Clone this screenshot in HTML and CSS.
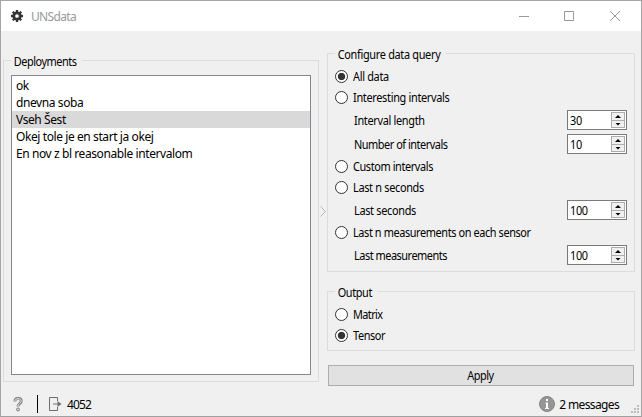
FILE: index.html
```html
<!DOCTYPE html>
<html lang="en">
<head>
<meta charset="utf-8">
<title>UNSdata</title>
<link rel="stylesheet" href="styles.css">
</head>
<body>
<div class="window">
  <header class="titlebar">
    <svg class="gear" width="12" height="12" viewBox="-6 -6 12 12"><circle r="3.2" fill="none" stroke="#333" stroke-width="2.700"/><g stroke="#333" stroke-width="2.300"><path d="M0-6V-3.4M0 6V3.4M-6 0H-3.4M6 0H3.4M-4.300-4.300-2.500-2.500M4.300 4.300 2.500 2.500M-4.300 4.300-2.500 2.500M4.300-4.300 2.500-2.500"/></g></svg>
    <span class="title">UNSdata</span>
    <svg class="controls" width="104" height="12" viewBox="0 0 104 12" fill="none" stroke="#999"><path d="M1 6.5H11M46.500 1.500H55.500V10.500H46.500ZM92 1 102 11M102 1 92 11"/></svg>
  </header>
  <main class="content">
    <section class="group deployments">
      <h2 class="legend tighter">Deployments</h2>
      <ul class="list">
        <li>ok</li>
        <li>dnevna soba</li>
        <li class="selected">Vseh Šest</li>
        <li>Okej tole je en start ja okej</li>
        <li>En nov z bl reasonable intervalom</li>
      </ul>
    </section>
    <div class="splitter"><svg width="6" height="11" viewBox="0 0 6 11" fill="none" stroke="#b4b4b4"><path d="M.5.5 5.500 5.500.5 10.500"/></svg></div>
    <div class="side">
      <section class="group query">
        <h2 class="legend">Configure data query</h2>
        <div class="radio"><i class="dot on"></i><span>All data</span></div>
        <div class="radio"><i class="dot"></i><span>Interesting intervals</span></div>
        <div class="field"><span>Interval length</span><div class="spin"><b>30</b><i class="steps"><i class="up"></i><i class="down"></i></i></div></div>
        <div class="field"><span class="tighter">Number of intervals</span><div class="spin"><b>10</b><i class="steps"><i class="up"></i><i class="down"></i></i></div></div>
        <div class="radio"><i class="dot"></i><span class="tight">Custom intervals</span></div>
        <div class="radio"><i class="dot"></i><span>Last n seconds</span></div>
        <div class="field"><span>Last seconds</span><div class="spin"><b>100</b><i class="steps"><i class="up"></i><i class="down"></i></i></div></div>
        <div class="radio"><i class="dot"></i><span class="tight">Last n measurements on each sensor</span></div>
        <div class="field"><span class="tighter">Last measurements</span><div class="spin"><b>100</b><i class="steps"><i class="up"></i><i class="down"></i></i></div></div>
      </section>
      <section class="group output">
        <h2 class="legend tight">Output</h2>
        <div class="radio"><i class="dot"></i><span class="tightest">Matrix</span></div>
        <div class="radio"><i class="dot on"></i><span class="tight">Tensor</span></div>
      </section>
      <button class="apply"><span>Apply</span></button>
    </div>
  </main>
  <footer class="status">
    <svg class="help" width="10" height="15" viewBox="0 0 10 15" fill="none"><path d="M1.800 4.500C1.800 0 8.200.7 8.200 4.200 8.200 6.800 5 6.500 5 9.500" stroke="#858585" stroke-width="3"/><path d="M1.800 4.200C2 .7 8.200.9 8.200 4.200 8.200 6.500 5 6.500 5 9.100" stroke="#e8e8e8" stroke-width="1"/><circle cx="5" cy="12.500" r="1.500" fill="#ccc" stroke="#858585"/></svg>
    <span class="bar"></span>
    <svg class="export" width="13" height="14" viewBox="0 0 13 14" fill="none" stroke="#6e6e6e"><path d="M8.500 4V.5H.5V13.500H8.500V10M4 7H11"/><path d="M8.500 4 12.500 7 8.500 10Z" fill="#6e6e6e" stroke="none"/></svg>
    <span class="count">4052</span>
    <svg class="info" width="16" height="16" viewBox="0 0 16 16"><circle cx="8" cy="8" r="7.500" fill="#969696" stroke="#858585"/><path d="M7 3H9V5H7ZM6.500 6.500H9V12H10V13H6V12H7V7.500H6.500Z" fill="#fff"/></svg>
    <span class="messages">2 messages</span>
    <svg class="grip" width="8" height="8" viewBox="0 0 8 8" fill="#bcbcbc"><path d="M6 0H8V2H6ZM3 3H5V5H3ZM6 3H8V5H6ZM0 6H2V8H0ZM3 6H5V8H3ZM6 6H8V8H6Z"/></svg>
  </footer>
</div>
</body>
</html>
```
FILE: styles.css
```css
* { box-sizing: border-box; }
body { margin: 0; font: 12px/17px "Noto Sans", "Open Sans", sans-serif; color: #000; }
.window { width: 642px; height: 417px; display: flex; flex-direction: column; background: #f0f0f0; border: 1px solid #a5a5a5; border-bottom-color: #a0a0a0; overflow: hidden; }
span, b, li, h2 { white-space: nowrap; }
.titlebar { height: 30px; flex: none; display: flex; align-items: center; background: #fff; padding: 0 19px 0 10px; }
.title { margin-left: 8px; color: #999; letter-spacing: -0.65px; }
.controls { margin-left: auto; }
.content { height: 355px; flex: none; display: flex; padding-left: 2px; letter-spacing: -0.35px; }
.group { position: relative; border: 1px solid #dcdcdc; }
.legend { position: absolute; top: -8px; left: 7px; margin: 0; padding: 0 6px 0 3px; background: #f0f0f0; font-size: 12px; font-weight: 400; line-height: 17px; }
.legend, .side span, .spin b { transform: scaleX(0.91); transform-origin: left center; }
.tight { letter-spacing: -0.44px; }
.tighter { letter-spacing: -0.52px; }
.tightest { letter-spacing: -0.65px; }
.deployments { width: 316px; height: 322px; margin-top: 29px; padding: 14px 7px 0; }
.list { height: 300px; margin: 0; padding: 1px 0; list-style: none; background: #fff; border: 1px solid #828790; letter-spacing: -0.41px; }
.list li { height: 17px; padding-left: 4px; line-height: 17px; }
.selected { background: #d9d9d9; }
.splitter { width: 8px; padding: 175px 1px 0; }
.splitter svg { display: block; }
.side { width: 308px; margin-top: 22px; }
.query { height: 219px; padding: 12px 7px 0; }
.output { height: 60px; margin-top: 19px; padding: 12px 7px 0; }
.radio { height: 21px; display: flex; align-items: center; gap: 5px; }
.dot { width: 13px; height: 13px; border: 1px solid #333; border-radius: 50%; background: #fff; }
.on { background: radial-gradient(circle, #333 3.3px, #fff 4.1px); }
.field { height: 24px; display: flex; align-items: center; justify-content: space-between; padding-left: 19px; }
.spin { width: 60px; height: 20px; display: flex; align-items: center; justify-content: space-between; padding: 0 1px 0 2px; background: #fff; border: 1px solid #7a7a7a; }
.spin b { font-weight: 400; padding-top: 1px; }
.steps { width: 14px; height: 16px; display: grid; grid-template-rows: 7px 7px; border: 1px solid #adadad; background: #f0f0f0; }
.up, .down { display: flex; align-items: center; justify-content: center; height: 7px; }
.down { border-top: 1px solid #adadad; }
.up::before, .down::before { content: ""; width: 6px; height: 3px; background: #000; clip-path: polygon(50% 0, 100% 100%, 0 100%); }
.down::before { clip-path: polygon(0 0, 100% 0, 50% 100%); }
.apply { display: block; width: 306px; height: 21px; margin: 14px 0 0 1px; padding: 0; border: 1px solid #adadad; background: #e1e1e1; color: #000; font: 12px/17px "Noto Sans", sans-serif; letter-spacing: -0.55px; }
.side .apply span { display: inline-block; transform-origin: center; position: relative; left: -1px; }
.status { flex: 1; display: flex; align-items: flex-start; padding: 9px 2px 0 12px; }
.bar { width: 1px; height: 18px; margin-left: 14px; background: #000; }
.help { margin-top: 2px; }
.export { margin: 2px 0 0 11px; }
.count { margin: 1px 0 0 5px; letter-spacing: -0.9px; }
.info { margin-left: auto; margin-top: 1px; }
.messages { margin: 1px 0 0 4px; letter-spacing: -0.64px; }
.grip { margin: 10px 0 0 12px; }
```
